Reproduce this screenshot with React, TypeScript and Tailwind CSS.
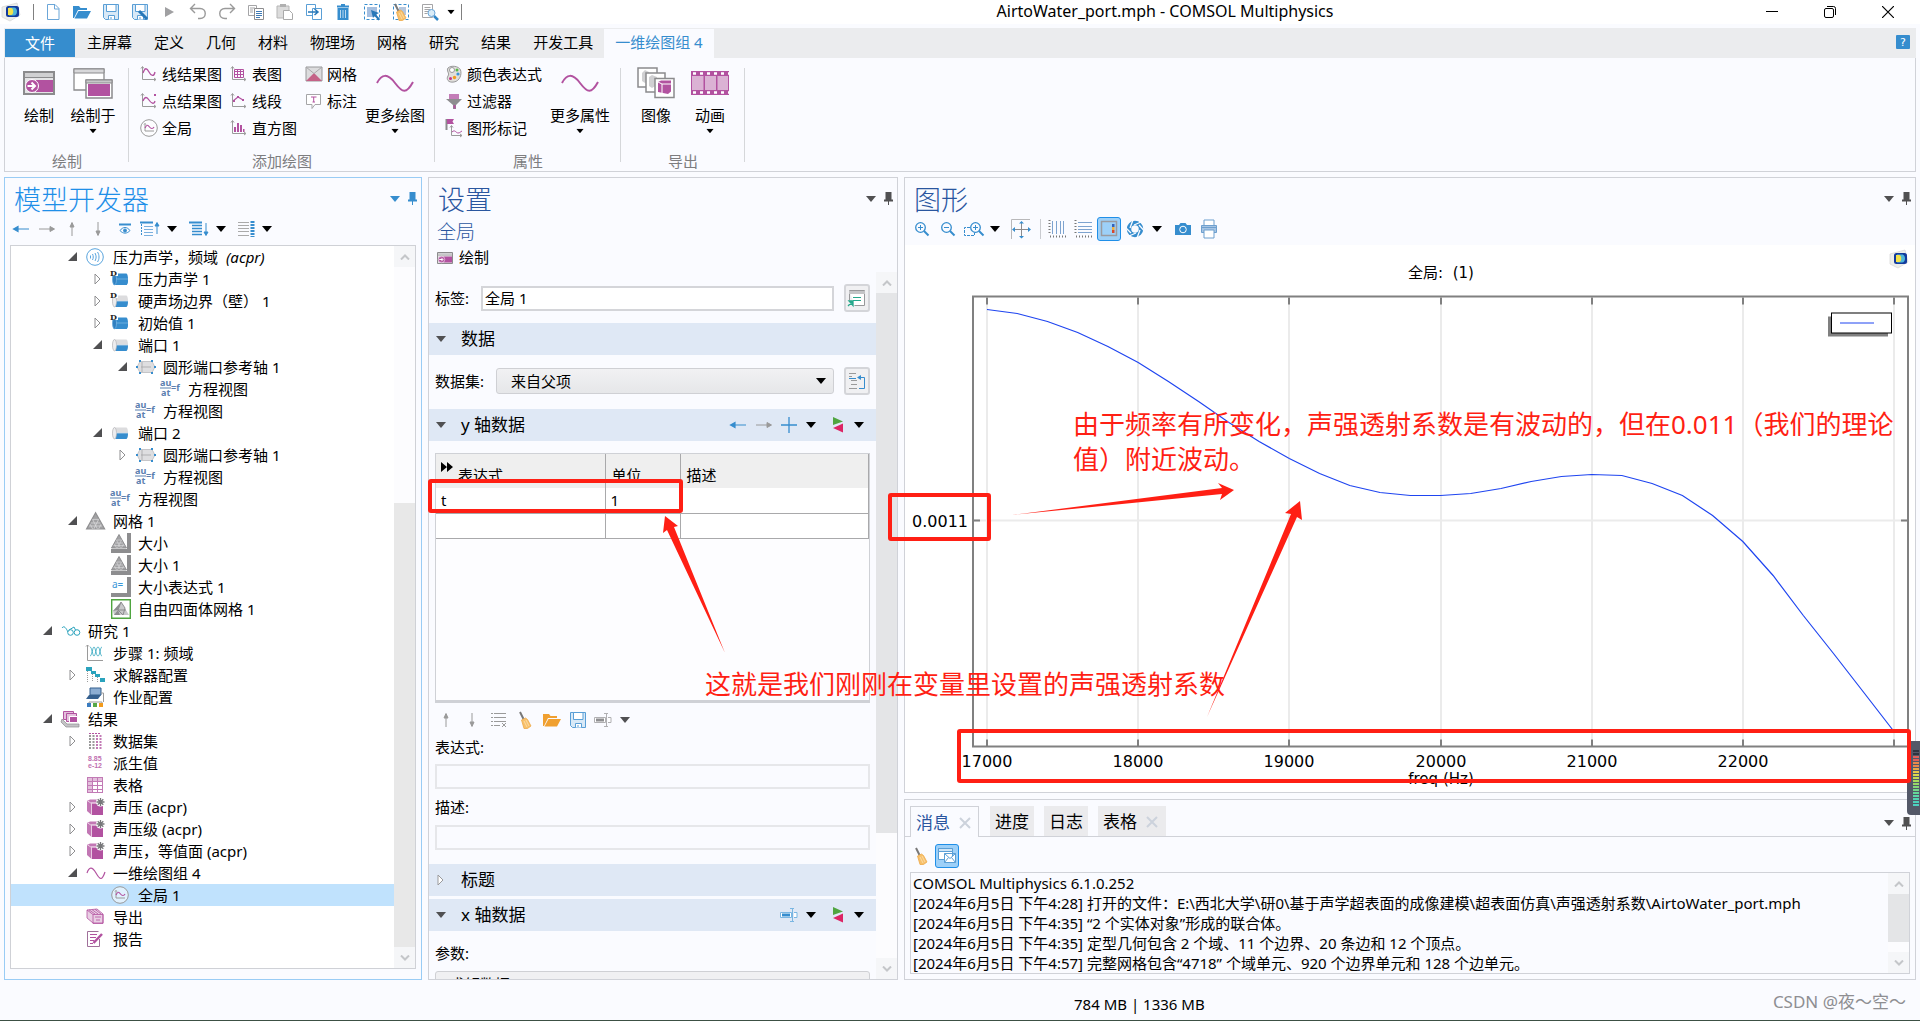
import React, { useState } from 'react';
import clsx from 'clsx';

const BLUE = '#368dce';
const GRAY = '#9a9a9a';
const DARK = '#505052';
const PURPLE = '#b252a0';
const TEAL = '#2ba3bd';

const UI_FONT = "font-['Noto_Sans','Noto_Sans_CJK_SC',sans-serif]";

/* ---------- icons ---------- */

interface IconDef {
    w: number;
    h: number;
    body: React.ReactNode;
}

const axes = <path d="M2.500 2v12.500h13M1 3.500l1.500-2 1.500 2M14 13l2 1.500-2 1.500" fill="none" stroke={GRAY} />;

const broomBody = (
    <g>
        <path d="M3 1l3.500 7" stroke="#777" strokeWidth="2" />
        <path d="M4.500 9l4-2 2 1.500 3.500 6.500-3.500 2.500H7z" fill="#f7c06a" stroke="#eda94a" strokeWidth=".8" />
        <path d="M7 10l3 6M9 9l3 6" stroke="#fbe0b0" strokeWidth=".8" />
    </g>
);

const floppy = (
    <g fill="none" stroke="#5a9fd6">
        <path d="M1.500 1.500h15v15h-13l-2-2z" fill="#d8e9f7" />
        <path d="M4.500 1.500h9.500v7H4.500z" fill="#fff" />
        <path d="M6.500 16.500v-4h6v4M9 16v-2" fill="#fff" />
    </g>
);

const cylinder = (dark: boolean) => (
    <g>
        <path d="M3 3.500h12.500c2 1 2 10.500 0 11.500H3c-2-1-2-10.500 0-11.500z" fill={dark ? BLUE : '#dcdcde'} />
        <path d="M4.500 9H17c0 3-.5 5-1.500 6H4.500z" fill={BLUE} />
        <ellipse cx="3.500" cy="9.200" rx="2" ry="5.700" fill={dark ? '#2f7fc0' : '#ededef'} stroke={dark ? '#7ab6e2' : '#b5b5b8'} strokeWidth=".7" />
        <path d="M5 9h12" stroke={dark ? '#7ab6e2' : '#c9dcec'} strokeWidth=".8" />
    </g>
);

const letterD = (
    <g>
        <path d="M-1-1h8v7h-8z" fill="#fff" />
        <text x="-1" y="6" fontSize="8" fontWeight="700" fontFamily="DejaVu Serif, serif" fill="#222">D</text>
    </g>
);

const meshTriangle = (
    <g fill="none">
        <path d="M8 1.500l7.500 13.500H.5z" fill="#a2a2a4" stroke="#8f8f91" />
        <path d="M5.500 7h5M4 10h8M2.500 12.500h11M5.500 7l4 8M3.500 11l2 4M10.500 7l-4 8M12.500 11l-2 4" stroke="#dcdcde" strokeWidth=".6" />
    </g>
);

const sizeFrame = <path d="M0 16h16V0h4v20H0z" fill="#8d8d8f" />;

const cubeStar = (
    <g>
        <path d="M1 3l3-1.500h9l-1 3H5v12L1 13z" fill="#c277b4" />
        <path d="M5.500 5.500H17V17H5.500z" fill={PURPLE} />
        <path d="M1 2.500l4.500 3V17" fill="none" stroke="#e8c9e2" />
        <circle cx="14.500" cy="4" r="4.500" fill="#fff" />
        <path d="M14.500 0v8M10.500 4h8M11.700 1.200l5.600 5.600M17.300 1.200l-5.600 5.600" stroke="#77777a" strokeWidth="1.300" />
    </g>
);

const sine = (w: number, h: number) => (
    <path
        d={`M1 ${h / 2}C${w * 0.15} 0 ${w * 0.3} -1 ${w / 2} ${h / 2}S${w * 0.8} ${h + 2} ${w - 1} ${h / 2 - 1}`}
        fill="none"
        stroke={PURPLE}
        strokeWidth={w > 24 ? 2 : 1.200}
    />
);

const windowPlot = (
    <g>
        <path d="M1 1h30v22H1z" fill="#e4e4e6" stroke="#8b8b8d" strokeWidth="2" />
        <path d="M2 2h28v4H2z" fill="#d0d0d2" />
        <path d="M2 6.500h28" stroke="#8b8b8d" />
        <path d="M13 9h17v12H13z" fill={PURPLE} />
        <circle cx="9" cy="15" r="6.500" fill={PURPLE} stroke="#fff" />
        <path d="M4.500 15h7M8.500 11.500l3.500 3.500-3.500 3.500" stroke="#fff" strokeWidth="2" fill="none" />
    </g>
);

const magnifier = (
    <g fill="none" stroke={BLUE}>
        <circle cx="5.500" cy="5.500" r="4.800" strokeWidth="1.300" />
        <path d="M9 9l4.500 4.500" strokeWidth="2" />
    </g>
);

const comsolMark = (
    <g>
        <path d="M1 5l15-4 3 12-10 6-8-4z" fill="#eceeea" stroke="#d8d8d8" strokeWidth=".8" />
        <rect x="5" y="4" width="13" height="11" rx="2.500" fill="#123a9c" />
        <path d="M8 5.500h5c4 0 4 8 0 8H8z" fill="#4fb6d8" />
        <path d="M7 6h3c3 0 3 7 0 7H7z" fill="#f3e24a" />
    </g>
);

const ICONS: Record<string, IconDef> = {
    comsol: { w: 20, h: 20, body: comsolMark },
    newFile: { w: 18, h: 18, body: <path d="M3.500 1.500h7.500l4 4v11h-11.500zM10.500 1.500v4.500h4.500" fill="#fff" stroke="#6ba6d8" /> },
    open: {
        w: 18, h: 18,
        body: <g fill={BLUE}><path d="M0 3h6l1.500 2H14v2H5l-4 8H0z" /><path d="M5.500 8H18l-4 7.500H1.500z" /></g>,
    },
    save: { w: 18, h: 18, body: floppy },
    saveAs: { w: 18, h: 18, body: <g>{floppy}<path d="M8 8l8 8" stroke="#2878b8" strokeWidth="3" /></g> },
    play: { w: 18, h: 18, body: <path d="M5 4l9 5-9 5z" fill="#a0a0a2" /> },
    undo: { w: 18, h: 18, body: <path d="M6 1L1.500 5.500 6 10M2 5.500h9c7 0 7 10 0 10H9" fill="none" stroke={GRAY} strokeWidth="1.400" /> },
    redo: { w: 18, h: 18, body: <path d="M12 1l4.500 4.500L12 10M16 5.500H7c-7 0-7 10 0 10h2" fill="none" stroke={GRAY} strokeWidth="1.400" /> },
    copy: {
        w: 18, h: 18,
        body: (
            <g fill="#fff">
                <path d="M1.500 2.500h8v10h-8z" stroke="#a5a5a7" />
                <path d="M3 5h5M3 7h3M3 9h3" stroke="#a5a5a7" />
                <path d="M7.500 5.500h9v11h-9z" stroke="#8d8d8f" />
                <path d="M9 8.500h6M9 10.500h6M9 12.500h6M9 14.500h4" stroke="#3f7ab5" />
            </g>
        ),
    },
    paste: {
        w: 18, h: 18,
        body: (
            <g>
                <path d="M1 3h12v12H1z" fill="#dcdcdc" stroke="#b5b5b5" />
                <path d="M4 1h6v3H4z" fill="#b0b0b0" />
                <path d="M7.500 7.500h6l3 3v6h-9z" fill="#fff" stroke="#a9a9a9" />
            </g>
        ),
    },
    duplicate: {
        w: 18, h: 18,
        body: (
            <g fill="#fff" stroke="#5a9fd6">
                <path d="M1.500 1.500h9v11h-9z" />
                <path d="M7.500 5.500h9v11h-9z" />
                <path d="M3 9h9M9.500 6l3.500 3-3.500 3" stroke="#2878b8" strokeWidth="1.500" fill="none" />
            </g>
        ),
    },
    trash: {
        w: 18, h: 18,
        body: (
            <g>
                <path d="M3.500 5h11v12h-11z" fill={BLUE} />
                <path d="M3 3.500h12M7 2h4" stroke={BLUE} strokeWidth="1.800" />
                <path d="M6.500 7v8M9 7v8M11.500 7v8" stroke="#bcd9ef" />
            </g>
        ),
    },
    select: {
        w: 18, h: 18,
        body: (
            <g>
                <path d="M1.500 1.500h15v15h-15z" fill="none" stroke={BLUE} strokeDasharray="3 2" />
                <path d="M4 4h10v10H4z" fill="#a5bfe0" />
                <path d="M8 7l8 3-3 1.500 4 4.500-1.500 1.500-4-4.500L10 15z" fill="#2878b8" />
            </g>
        ),
    },
    selectClear: {
        w: 18, h: 18,
        body: (
            <g>
                <path d="M1.500 1.500h15v15h-15z" fill="none" stroke={BLUE} strokeDasharray="3 2" />
                <path d="M7 4h7v8H7z" fill="#b4c6de" />
                {broomBody}
            </g>
        ),
    },
    docSearch: {
        w: 18, h: 18,
        body: (
            <g>
                <path d="M1.500 1.500h10v13h-10z" fill="#fff" stroke="#a5a5a7" />
                <path d="M3.500 4.500h6M3.500 6.500h6M3.500 8.500h4M3.500 10.500h3" stroke="#a5a5a7" />
                <circle cx="10.500" cy="10" r="3.500" fill="#d9ecf8" stroke="#6ba6d8" />
                <path d="M13 13l4 4" stroke="#2f86c8" strokeWidth="2.500" />
            </g>
        ),
    },
    plotWindow: { w: 32, h: 24, body: windowPlot },
    plotIn: {
        w: 40, h: 32,
        body: (
            <g stroke="#8b8b8d">
                <path d="M1 2h30v21H1z" fill="#fff" strokeWidth="1.300" />
                <path d="M1 2h30v4H1z" fill="#d8d8da" />
                <path d="M13 13h26v18H13z" fill="#fff" strokeWidth="1.500" />
                <path d="M13 13h26v3H13z" fill="#c8c8ca" />
                <path d="M15 17h22v12H15z" fill={PURPLE} stroke="none" />
            </g>
        ),
    },
    lineGraph: { w: 18, h: 18, body: <g>{axes}<path d="M3 8c2-6 4-5 6-1s5 5 6 0" fill="none" stroke={PURPLE} strokeWidth="1.300" /></g> },
    pointGraph: {
        w: 18, h: 18,
        body: <g>{axes}<path d="M3 9c2-5 4-4 6-1s5 5 6 1" fill="none" stroke={PURPLE} strokeWidth="1.300" /><path d="M14 2h2v2h-2z" fill={PURPLE} /></g>,
    },
    global: {
        w: 18, h: 18,
        body: (
            <g fill="none">
                <circle cx="9" cy="9" r="8.300" stroke={GRAY} fill="#fff" fillOpacity=".5" />
                <path d="M5 4.500V12h9M4 5.500l1-1 1 1" stroke={GRAY} />
                <path d="M5 9c2-4 3-3 4.500-1s3.500 2 4.500 0" stroke={PURPLE} strokeWidth="1.200" />
            </g>
        ),
    },
    tableGraph: { w: 18, h: 18, body: <g>{axes}<path d="M4.500 4.500h9v8h-9zM4.500 6.500h9M4.500 9.500h9M7.500 4v8M10.500 4v8" fill="none" stroke={PURPLE} /></g> },
    segments: { w: 18, h: 18, body: <g>{axes}<path d="M3 9l5-4 5 3" fill="none" stroke={PURPLE} strokeWidth="1.200" /><path d="M7 4h2v2H7zM12 7h2v2h-2zM3 8h2v2H3z" fill={PURPLE} /></g> },
    histogram: { w: 18, h: 18, body: <g>{axes}<path d="M4 8h2v5H4zM7 4h2v9H7zM10 6h2v7h-2zM13 10h1.500v3H13z" fill={PURPLE} /></g> },
    meshPlot: {
        w: 18, h: 18,
        body: <g><path d="M1 2h16v14H1z" fill="#dcdcde" stroke="#98989a" /><path d="M1 16L9 8l8 8z" fill="#c46287" /><path d="M1 2l8 6.500L17 2" fill="none" stroke="#a8a8aa" /></g>,
    },
    annotation: {
        w: 18, h: 18,
        body: <g><path d="M1.500 2.500h14v10H10l-3 4v-4H1.500z" fill="#fff" stroke="#a5a5a7" /><path d="M6 5h5.500M8.700 5v5M7.500 10H10" stroke={PURPLE} fill="none" /></g>,
    },
    sineLarge: { w: 38, h: 18, body: sine(38, 18) },
    sine: { w: 20, h: 12, body: sine(20, 12) },
    palette: {
        w: 18, h: 18,
        body: (
            <g>
                <path d="M3 3c3-3 11-2 12.500 2S15 16 9 17 1 14 3 11s-2-5 0-8z" fill="#e0dfdb" stroke="#99999b" />
                <circle cx="7" cy="5" r="2.500" fill="#fff" stroke="#99999b" />
                <circle cx="12" cy="5" r="1.500" fill="#57b947" />
                <circle cx="13" cy="9" r="1.600" fill="#3a96d8" />
                <circle cx="9.500" cy="12.500" r="1.700" fill="#f39b1d" />
                <circle cx="5.500" cy="13.500" r="1.500" fill="#c0388a" />
            </g>
        ),
    },
    filter: {
        w: 18, h: 18,
        body: <g><path d="M4 2h10v5H4z" fill="#c47db8" /><path d="M1 7h16l-6 6v4H8v-4z" fill="#8d8d8f" /><path d="M8.500 13h2v4l-2-1z" fill={PURPLE} /></g>,
    },
    marker: {
        w: 18, h: 18,
        body: (
            <g fill="none">
                <path d="M1.500 0v11" stroke="#8b8b8d" strokeWidth="2" />
                <path d="M2 0h7L7.500 2.500 9 5H2z" fill={PURPLE} />
                <path d="M6.500 7v9.500H17M5 8.500l1.500-2 1.500 2M15 15l2 1.500-2 1.500" stroke={GRAY} />
                <path d="M7 13c3-3 4 1 6 1s2-1 4-2" stroke={PURPLE} />
            </g>
        ),
    },
    image: {
        w: 38, h: 32,
        body: (
            <g fill="#fff" stroke="#8b8b8d" strokeWidth="1.500">
                <path d="M1 1h19v19H1z" />
                <path d="M5 6l3-3 4 2v9l-4 2-3-2z" fill="#d0d0d2" stroke="none" />
                <path d="M9 6h19v19H9z" />
                <path d="M12 10l3-2 5 2v8l-5 3-3-2z" fill="#d0d0d2" stroke="none" />
                <path d="M18 11.500h19v19H18z" />
                <path d="M21 15l3-1.500h10v11L31 27l-10-2z" fill={PURPLE} stroke="none" />
                <path d="M21 15l4 2v9M25 17h9" stroke="#fff" fill="none" strokeWidth="1" />
            </g>
        ),
    },
    film: {
        w: 38, h: 24,
        body: (
            <g>
                <path d="M0 0h38v24H0z" fill={PURPLE} />
                <path d="M1 5h11.500v14H1zM14 5h11v14H14zM26.500 5H37v14H26.500z" fill="#dbb2d4" />
                <path d="M2 2.500h36M2 21.500h36" stroke="#fff" strokeWidth="2.500" strokeDasharray="3 4" />
            </g>
        ),
    },
    help: {
        w: 14, h: 14,
        body: <g><rect width="14" height="14" rx="1" fill={BLUE} /><text x="4" y="11" fontSize="11" fontFamily="DejaVu Sans, sans-serif" fill="#fff">?</text></g>,
    },
    left: { w: 18, h: 14, body: <path d="M1 7h16M1.500 7L6 4.500v5z" fill={BLUE} stroke={BLUE} strokeWidth="1.200" /> },
    right: { w: 18, h: 14, body: <path d="M1 7h15M16.500 7L12 4.500v5z" fill={GRAY} stroke={GRAY} /> },
    up: { w: 12, h: 16, body: <path d="M6 2v13M6 1.500L4 6h4z" fill={GRAY} stroke={GRAY} /> },
    down: { w: 12, h: 16, body: <path d="M6 1v13M6 14.500L4 10h4z" fill={GRAY} stroke={GRAY} /> },
    plus: { w: 18, h: 18, body: <path d="M9 1v16M1 9h16" stroke={BLUE} strokeWidth="1.300" /> },
    show: {
        w: 14, h: 12,
        body: <g fill="none" stroke={BLUE}><path d="M1 1.500h12" strokeWidth="2" /><path d="M2 7.500c3-4 7-4 10 0-3 3.500-7 3.500-10 0z" /><circle cx="7" cy="7.500" r="1.500" fill={BLUE} /></g>,
    },
    collapse: {
        w: 20, h: 16,
        body: (
            <g fill="none" stroke={BLUE}>
                <path d="M0 1.500h13" strokeWidth="2" />
                <path d="M1.500 3v12" strokeDasharray="2 1" />
                <path d="M4 5.500h9M4 8.500h9M4 11.500h9M4 14.500h9" stroke="#7ab0de" />
                <path d="M17 2v11M17 1.500L15 5h4z" fill={BLUE} />
            </g>
        ),
    },
    expand: {
        w: 20, h: 16,
        body: (
            <g fill="none" stroke={BLUE}>
                <path d="M0 1.500h13" strokeWidth="2" />
                <path d="M3 4.500h10M3 7.500h10M3 10.500h10M3 13.500h10" strokeWidth="1.500" />
                <path d="M17 2v11M17 14.500L15 11h4z" fill={BLUE} />
            </g>
        ),
    },
    columns: {
        w: 18, h: 16,
        body: <g fill="none"><path d="M0 1.500h11M0 4.500h11M0 7.500h11M0 10.500h11M0 14.500h11" stroke="#aaa" /><path d="M14.500 0v16" stroke={BLUE} strokeWidth="4" strokeDasharray="2 1" /></g>,
    },
    pin: { w: 9, h: 13, body: <path d="M1.500 0h6v7.500H9v2H5V13H4V9.500H0v-2h1.500z" fill="currentColor" /> },
    acoustics: {
        w: 18, h: 18,
        body: (
            <g fill="none" stroke="#5aa5de">
                <circle cx="9" cy="9" r="8.300" />
                <path d="M4.500 7.500v3M6.500 6c1 2 1 4 0 6M9 5c1.500 3 1.500 5 0 8M11.500 4c2 3 2 7 0 10" />
            </g>
        ),
    },
    domain: { w: 18, h: 18, body: <g>{cylinder(true)}{letterD}</g> },
    boundary: { w: 18, h: 18, body: <g>{cylinder(false)}{letterD}</g> },
    port: { w: 18, h: 18, body: cylinder(false) },
    portAxis: {
        w: 20, h: 18,
        body: (
            <g>
                <path d="M4 3.500h12l3 5.500-3 5.500H4L1 9z" fill="#dedee0" stroke="#c5c5c8" />
                <path d="M5 9h10M6 4v10" stroke="#a5a5a7" strokeWidth=".8" />
                <path d="M3 2h2v2H3zM15 2h2v2h-2zM3 14h2v2H3zM15 14h2v2h-2zM0 8h2v2H0zM18 8h2v2h-2z" fill={BLUE} />
            </g>
        ),
    },
    equation: {
        w: 21, h: 18,
        body: (
            <g fontSize="9" fontWeight="700" fontFamily="Noto Sans, sans-serif" fill="#5b80b0">
                <text x="-1" y="6">au</text>
                <text x="0" y="16">at</text>
                <path d="M-1 8h11" stroke="#5b80b0" />
                <text x="10" y="11">=f</text>
            </g>
        ),
    },
    mesh: { w: 20, h: 18, body: <g transform="translate(0 -1) scale(1.200)">{meshTriangle}</g> },
    meshSize: { w: 20, h: 20, body: <g>{sizeFrame}<path d="M0 0h16v16H0z" fill="#fff" />{meshTriangle}</g> },
    sizeExpr: {
        w: 20, h: 20,
        body: <g>{sizeFrame}<path d="M0 0h16v16H0z" fill="#fff" /><text x="1" y="11" fontSize="10" fontFamily="Noto Sans, sans-serif" fill="#3a96d8">a=</text></g>,
    },
    tetra: {
        w: 20, h: 20,
        body: (
            <g>
                <path d="M.7.700h18.600v18.600H.7z" fill="#fff" stroke="#4fa53f" strokeWidth="1.400" />
                <path d="M10 3L2 12l1 4h15z" fill="#c8c8ca" />
                <path d="M10 3L2 12l5-1zM7 11l-4 5h6z" fill="#8d8d8f" />
                <path d="M10 3l-3 8 5 5 2-7zM7 11h8" fill="none" stroke="#8d8d8f" />
            </g>
        ),
    },
    study: {
        w: 20, h: 12,
        body: <g fill="none" stroke={TEAL}><path d="M1 3c2-3 4 0 6 4" /><circle cx="9.500" cy="7.500" r="2.800" /><circle cx="16" cy="7.500" r="2.800" /><path d="M8 5l5-3 1.500 3" /></g>,
    },
    freqStep: {
        w: 18, h: 18,
        body: <g fill="none"><path d="M1.500 1v15.500H17M0 2.500L1.500 1 3 2.500" stroke={GRAY} /><path d="M4 3c2 0 2.500 9 4 9s2-9 4-9 2 9 4 9M4 12c2 0 2.500-9 4-9s2 9 4 9 2-9 4-9" stroke={TEAL} strokeWidth=".8" /></g>,
    },
    solver: {
        w: 19, h: 18,
        body: <g><path d="M1.500 5v11M6.500 8v8M11.500 11v5" stroke={GRAY} strokeDasharray="1 1" /><path d="M0 1h6v4H0zM5 5h5v3H5zM9 8h5v3H9zM14 12h5v4h-5z" fill={TEAL} /></g>,
    },
    job: {
        w: 19, h: 20,
        body: (
            <g>
                <path d="M4 1h11v7H4z" fill="#8cadd2" stroke="#35608f" />
                <path d="M3 8h12l-3 4H0z" fill="#35608f" />
                <path d="M3 17v-2h13v2M15 6h2.500v9" fill="none" stroke={GRAY} />
                <path d="M1 16h4v4H1z" fill="#3a7cc0" /><path d="M7 16h4v4H7z" fill="#57a847" /><path d="M13 16h4v4h-4z" fill="#f39b1d" />
            </g>
        ),
    },
    results: {
        w: 19, h: 18,
        body: (
            <g fill="#fff">
                <path d="M2.500 1.500h10v8h-10z" fill="#e3bfdc" stroke={PURPLE} />
                <path d="M5.500 3.500h10v8h-10z" fill="#e3bfdc" stroke={PURPLE} />
                <path d="M8.500 6.500h8v6h-8z" fill={PURPLE} stroke="#fff" />
                <path d="M1 9l5 5h12v3H5L0 12z" fill="#c4c4c6" stroke="#8d8d8f" strokeWidth=".7" />
            </g>
        ),
    },
    dataset: {
        w: 18, h: 18,
        body: <g fill="none"><path d="M3 1.500h12" stroke={PURPLE} strokeDasharray="2 1" /><path d="M4 3v14M7.500 3v14" stroke={GRAY} strokeWidth="2" strokeDasharray="2 1" /><path d="M11 3v14M14.500 3v14" stroke="#c27ab5" strokeWidth="2" strokeDasharray="2 1" /></g>,
    },
    derived: {
        w: 18, h: 18,
        body: <g fontSize="7" fontWeight="700" fontFamily="Liberation Sans, sans-serif" fill="#bf6fb1"><text x="2" y="7">8.85</text><text x="2" y="14">e-12</text></g>,
    },
    table: {
        w: 18, h: 18,
        body: <g><path d="M1 1h16v4H1zM1 1h5v16H1z" fill="#e3bfdc" /><path d="M1 1.500h16M1 5.500h16M1 9.500h16M1 13.500h16M1 16.500h16M1.500 1v16M6.500 1v16M11.500 1v16M16.500 1v16" stroke="#c27ab5" /></g>,
    },
    plot3d: { w: 19, h: 18, body: cubeStar },
    exportNode: {
        w: 18, h: 18,
        body: (
            <g fill="#e9cfe4" stroke={PURPLE} strokeWidth=".8">
                <path d="M1 2l10-1 6 5v9H7L1 10z" />
                <path d="M7 6.500h10v9H7zM1 2l6 4.500M3 1.800L9 6M6 1.600L12 6M9 1.300L15 6M9 9h6M10 12h4" fill="none" />
            </g>
        ),
    },
    report: {
        w: 18, h: 18,
        body: (
            <g fill="none" stroke={PURPLE}>
                <path d="M13.500 9v7.500h-12V1.500h11" stroke="#a0709a" />
                <path d="M4 4.500h7M4 7.500h6M4 10.500h4M4 13.500h3" />
                <path d="M7.500 13l8.500-9" strokeWidth="2.500" />
            </g>
        ),
    },
    labelBtn: {
        w: 18, h: 18,
        body: (
            <g fill="none">
                <path d="M1.500 1.500h15v15h-10M1.500 1.500v10" stroke="#98989a" fill="#fff" />
                <path d="M1 2h16v3H1z" fill="#c4c4c6" />
                <path d="M5 8.500h8M5 11.500h8" stroke="#27a88c" />
                <path d="M0 17l4-4M5 12v4.500L1 12z" stroke="#27a88c" strokeWidth="1.300" fill="#27a88c" />
            </g>
        ),
    },
    gotoBtn: {
        w: 18, h: 18,
        body: (
            <g fill="none">
                <path d="M1 1.500h7M1 4.500h3M3 8.500h6M3 12.500h6M1 16.500h8" stroke={GRAY} />
                <path d="M1 6.500h7M12 5.500h4.500v11H11" stroke={BLUE} />
                <path d="M13 3v5l-4-2.500z" fill={BLUE} />
            </g>
        ),
    },
    addRemove: { w: 12, h: 16, body: <g><path d="M1 0l10 4.500L1 8z" fill="#4fa53f" /><path d="M11 6.500v9L1 11z" fill="#dc2464" /></g> },
    listDel: {
        w: 16, h: 16,
        body: <g fill="none" stroke={GRAY}><path d="M0 1.500h16M0 5.500h16M0 9.500h16M0 13.500h9" strokeDasharray="2 1 12" /><path d="M11 11l4 4M15 11l-4 4" /></g>,
    },
    broom: { w: 16, h: 18, body: broomBody },
    openOrange: { w: 18, h: 16, body: <g fill="#f0a030"><path d="M0 2h6l1.500 2H14v2H5l-4 8H0z" /><path d="M5.500 7H18l-4 7.500H1.500z" /></g> },
    renameGray: {
        w: 18, h: 14,
        body: <g fill="none" stroke="#b0b0b2"><path d="M.5 4.500h11v5H.5zM14 4.500h3v5h-3" fill="#fff" /><path d="M2 7h8" stroke="#8f8f91" strokeWidth="3" /><path d="M10 .5h4M10 13.500h4M12.500 1v12" /></g>,
    },
    renameBlue: {
        w: 18, h: 14,
        body: <g fill="none" stroke="#7ab6e2"><path d="M.5 4.500h11v5H.5zM14 4.500h3v5h-3" fill="#fff" /><path d="M2 7h8" stroke={BLUE} strokeWidth="3" /><path d="M10 .5h4M10 13.500h4M12.500 1v12" /></g>,
    },
    zoomIn: { w: 14, h: 14, body: <g>{magnifier}<path d="M3 5.500h5M5.500 3v5" stroke={BLUE} /></g> },
    zoomOut: { w: 14, h: 14, body: <g>{magnifier}<path d="M3 5.500h5" stroke={BLUE} /></g> },
    zoomBox: {
        w: 20, h: 14,
        body: <g><path d="M6 5.500H.5v8h10v-3" fill="none" stroke={BLUE} strokeDasharray="3 1" /><g transform="translate(6 0)">{magnifier}<path d="M3 5.500h5M5.500 3v5" stroke={BLUE} /></g></g>,
    },
    extents: {
        w: 20, h: 20,
        body: (
            <g fill="none">
                <path d="M.5 20V.5H19" stroke="#b8b8ba" />
                <path d="M3 10.500h15M10.500 3v15" stroke="#8b8b8d" />
                <path d="M4 8v5L1 10.500zM17 8v5l3-2.500zM8 4.500h5L10.500 2zM8 17h5l-2.500 2.500z" fill={BLUE} />
            </g>
        ),
    },
    gridX: {
        w: 18, h: 18,
        body: <g fill="none"><path d="M4.500 1v13M8.500 1v13M12.500 1v13M15.500 1v13" stroke="#7da3cf" /><path d="M1.500 0v15" stroke="#777" strokeDasharray="1 2" strokeWidth="2" /><path d="M2 16.500h16" stroke="#777" strokeDasharray="1 2" strokeWidth="2" /></g>,
    },
    gridY: {
        w: 18, h: 18,
        body: <g fill="none"><path d="M4 2.500h14M4 6.500h14M4 9.500h14M4 12.500h14" stroke="#7da3cf" /><path d="M1.500 0v15" stroke="#777" strokeDasharray="1 2" strokeWidth="2" /><path d="M2 16.500h16" stroke="#777" strokeDasharray="1 2" strokeWidth="2" /></g>,
    },
    legend: {
        w: 18, h: 18,
        body: (
            <g>
                <path d="M1.500 1.500h15v14h-15z" fill="none" stroke="#9a9aa0" strokeWidth="1.500" />
                <path d="M12 4h2.500v3H12z" fill="#3462b8" /><path d="M12 7h2.500v3H12z" fill="#f0b040" /><path d="M12 10h2.500v3H12z" fill="#d8482c" />
            </g>
        ),
    },
    aperture: {
        w: 18, h: 18,
        body: <g fill="none"><circle cx="9" cy="9" r="6" stroke={BLUE} strokeWidth="4.500" /><path d="M7 0L4 8M15 2l-7 3M17.500 10L13 5M11 18l3-8M3 16l7-3M0 8l5 5" stroke="#fafbff" strokeWidth="1.300" /></g>,
    },
    camera: {
        w: 18, h: 14,
        body: <g><path d="M1 3h4l1.500-2h5L13 3h4v10H1z" fill={BLUE} /><circle cx="9" cy="7.500" r="3.300" fill="none" stroke="#fff" /></g>,
    },
    printer: {
        w: 18, h: 20,
        body: (
            <g stroke="#6d9fce">
                <path d="M4 1h10v6H4z" fill="#fff" />
                <path d="M1.500 6.500h15v7h-15z" fill="#a5c4e4" />
                <path d="M1.500 8.500h15" />
                <path d="M4 11h10v8H4z" fill="#fff" />
            </g>
        ),
    },
    mailWindow: {
        w: 18, h: 16,
        body: (
            <g fill="#fff" stroke="#5a9fd6">
                <path d="M.5.500h14v11H.5z" />
                <path d="M.5.500h14v3H.5z" fill="#cfe5f7" />
                <path d="M6.500 5.500h11v9h-11zM6.500 5.500l5.500 5 5.500-5M6.500 14.500l4-5M17.500 14.500l-4-5" />
            </g>
        ),
    },
};

function Icon({ name }: { name: string }) {
    const { w, h, body } = ICONS[name];
    return (
        <svg className="shrink-0 overflow-visible" width={w} height={h} viewBox={`0 0 ${w} ${h}`} aria-hidden="true">
            {body}
        </svg>
    );
}

function Caret({ className = 'text-black' }: { className?: string }) {
    return (
        <svg className={clsx('shrink-0', className)} width="10" height="6" viewBox="0 0 10 6" aria-hidden="true">
            <path d="M0 0h10L5 6z" fill="currentColor" />
        </svg>
    );
}

function Chevron({ up = false }: { up?: boolean }) {
    return (
        <span className="flex h-[21px] shrink-0 items-center justify-center bg-[#f5f6f8]">
            <svg width="10" height="6" viewBox="0 0 10 6" aria-hidden="true">
                <path d={up ? 'M1 5.500l4-4 4 4' : 'M1 .500l4 4 4-4'} fill="none" stroke="#c4c6c9" strokeWidth="2" />
            </svg>
        </span>
    );
}

function IconButton({ name, label, className = '' }: { name: string; label: string; className?: string }) {
    return (
        <button type="button" aria-label={label} className={clsx('flex items-center justify-center', className)}>
            <Icon name={name} />
        </button>
    );
}

/* ---------- title bar and ribbon ---------- */

const QUICK_ACTIONS: [string, string][] = [
    ['newFile', '新建'], ['open', '打开'], ['save', '保存'], ['saveAs', '另存为'], ['play', '运行'],
    ['undo', '撤消'], ['redo', '重做'], ['copy', '复制'], ['paste', '粘贴'], ['duplicate', '创建副本'],
    ['trash', '删除'], ['select', '选择'], ['selectClear', '清除选择'], ['docSearch', '查找'],
];

function TitleBar() {
    return (
        <header className="flex h-6 shrink-0 items-center bg-white pl-px">
            <Icon name="comsol" />
            <span className="ml-3 h-4 w-px bg-[#808080]" />
            <div className="ml-[10px] flex items-center gap-[11px]">
                {QUICK_ACTIONS.map(([name, label]) => (
                    <IconButton key={name} name={name} label={label} />
                ))}
            </div>
            <button type="button" aria-label="自定义" className="ml-[7px] scale-75">
                <Caret />
            </button>
            <span className="ml-[5px] h-4 w-px bg-[#808080]" />
            <h1 className="flex-1 pb-[2px] pl-[126px] text-center text-base leading-5">AirtoWater_port.mph - COMSOL Multiphysics</h1>
            <div className="flex w-[178px] items-center justify-end gap-[46px] pb-px pr-[26px]">
                <button type="button" aria-label="最小化">
                    <svg width="12" height="12" viewBox="0 0 12 12"><path d="M0 5.500h12" stroke="#000" /></svg>
                </button>
                <button type="button" aria-label="还原">
                    <svg width="12" height="12" viewBox="0 0 12 12" fill="none" stroke="#000">
                        <rect x=".5" y="2.500" width="9" height="9" rx="1.500" />
                        <path d="M3 .5h6.500a2 2 0 0 1 2 2V9" />
                    </svg>
                </button>
                <button type="button" aria-label="关闭">
                    <svg width="12" height="12" viewBox="0 0 12 12"><path d="M0 0l12 12M12 0L0 12" stroke="#000" strokeWidth="1.200" /></svg>
                </button>
            </div>
        </header>
    );
}

const MENU_TABS = ['主屏幕', '定义', '几何', '材料', '物理场', '网格', '研究', '结果', '开发工具'];

function MenuTabs() {
    return (
        <nav className="mx-1 mt-1 flex h-[30px] shrink-0 items-stretch bg-[#ebecee] text-[15px] leading-5">
            <button type="button" className="mx-px mb-px mt-px w-[70px] bg-[#368dce] text-white">文件</button>
            {MENU_TABS.map(tab => (
                <button key={tab} type="button" className="px-[11px] pb-[2px]">{tab}</button>
            ))}
            <button type="button" className="mt-px bg-[#fafbff] px-[11px] pb-[3px] text-[#368dce]">一维绘图组 4</button>
            <IconButton name="help" label="帮助" className="ml-auto mr-[6px] pb-[2px]" />
        </nav>
    );
}

function BigButton({ icon, label, menu = false, className = '' }: { icon: string; label: string; menu?: boolean; className?: string }) {
    return (
        <button type="button" className={clsx('flex flex-col items-center', className)}>
            <span className="flex h-9 items-center"><Icon name={icon} /></span>
            <span className="mt-1 leading-5">{label}</span>
            {menu && <span className="mt-[3px] scale-75"><Caret /></span>}
        </button>
    );
}

function SmallButtons({ items }: { items: [string, string][] }) {
    return (
        <div className="flex flex-col">
            {items.map(([icon, label]) => (
                <button key={label} type="button" className="flex h-[27px] items-center gap-1 leading-5">
                    <Icon name={icon} />
                    {label}
                </button>
            ))}
        </div>
    );
}

function RibbonGroup({ title, className, children }: { title: string; className?: string; children: React.ReactNode }) {
    return (
        <section className="relative flex flex-col justify-between pt-[2px] after:absolute after:bottom-[9px] after:right-0 after:top-[10px] after:w-px after:bg-[#d5d7da]">
            <div className={clsx('flex items-start', className)}>{children}</div>
            <h2 className="text-center leading-5 text-[#7d7d7f]">{title}</h2>
        </section>
    );
}

function Ribbon() {
    return (
        <div className="mx-1 flex h-[114px] shrink-0 border border-t-0 border-[#d0d2d8] text-[15px]">
            <RibbonGroup title="绘制" className="gap-2 pl-3 pr-3 pt-[5px]">
                <BigButton icon="plotWindow" label="绘制" className="w-11" />
                <BigButton icon="plotIn" label="绘制于" menu className="w-12" />
            </RibbonGroup>
            <RibbonGroup title="添加绘图" className="gap-2 pl-[11px] pr-[10px]">
                <SmallButtons items={[['lineGraph', '线结果图'], ['pointGraph', '点结果图'], ['global', '全局']]} />
                <SmallButtons items={[['tableGraph', '表图'], ['segments', '线段'], ['histogram', '直方图']]} />
                <SmallButtons items={[['meshPlot', '网格'], ['annotation', '标注']]} />
                <BigButton icon="sineLarge" label="更多绘图" menu className="pt-[5px]" />
            </RibbonGroup>
            <RibbonGroup title="属性" className="gap-2 pl-[10px] pr-[11px]">
                <SmallButtons items={[['palette', '颜色表达式'], ['filter', '过滤器'], ['marker', '图形标记']]} />
                <BigButton icon="sineLarge" label="更多属性" menu className="pt-[5px]" />
            </RibbonGroup>
            <RibbonGroup title="导出" className="gap-4 px-4 pt-[5px]">
                <BigButton icon="image" label="图像" />
                <BigButton icon="film" label="动画" menu />
            </RibbonGroup>
        </div>
    );
}

/* ---------- model builder ---------- */

interface TreeNode {
    level: number;
    icon: string;
    text: string;
    state?: 'open' | 'closed';
    tag?: string;
}

const TREE: TreeNode[] = [
    { level: 1, icon: 'acoustics', text: '压力声学，频域', tag: '(acpr)', state: 'open' },
    { level: 2, icon: 'domain', text: '压力声学 1', state: 'closed' },
    { level: 2, icon: 'boundary', text: '硬声场边界（壁） 1', state: 'closed' },
    { level: 2, icon: 'domain', text: '初始值 1', state: 'closed' },
    { level: 2, icon: 'port', text: '端口 1', state: 'open' },
    { level: 3, icon: 'portAxis', text: '圆形端口参考轴 1', state: 'open' },
    { level: 4, icon: 'equation', text: '方程视图' },
    { level: 3, icon: 'equation', text: '方程视图' },
    { level: 2, icon: 'port', text: '端口 2', state: 'open' },
    { level: 3, icon: 'portAxis', text: '圆形端口参考轴 1', state: 'closed' },
    { level: 3, icon: 'equation', text: '方程视图' },
    { level: 2, icon: 'equation', text: '方程视图' },
    { level: 1, icon: 'mesh', text: '网格 1', state: 'open' },
    { level: 2, icon: 'meshSize', text: '大小' },
    { level: 2, icon: 'meshSize', text: '大小 1' },
    { level: 2, icon: 'sizeExpr', text: '大小表达式 1' },
    { level: 2, icon: 'tetra', text: '自由四面体网格 1' },
    { level: 0, icon: 'study', text: '研究 1', state: 'open' },
    { level: 1, icon: 'freqStep', text: '步骤 1: 频域' },
    { level: 1, icon: 'solver', text: '求解器配置', state: 'closed' },
    { level: 1, icon: 'job', text: '作业配置' },
    { level: 0, icon: 'results', text: '结果', state: 'open' },
    { level: 1, icon: 'dataset', text: '数据集', state: 'closed' },
    { level: 1, icon: 'derived', text: '派生值' },
    { level: 1, icon: 'table', text: '表格' },
    { level: 1, icon: 'plot3d', text: '声压 (acpr)', state: 'closed' },
    { level: 1, icon: 'plot3d', text: '声压级 (acpr)', state: 'closed' },
    { level: 1, icon: 'plot3d', text: '声压，等值面 (acpr)', state: 'closed' },
    { level: 1, icon: 'sine', text: '一维绘图组 4', state: 'open' },
    { level: 2, icon: 'global', text: '全局 1' },
    { level: 1, icon: 'exportNode', text: '导出' },
    { level: 1, icon: 'report', text: '报告' },
];

function PanelControls({ className = 'text-[#505052]' }: { className?: string }) {
    return (
        <div className={clsx('flex items-center gap-2', className)}>
            <button type="button" aria-label="面板菜单"><Caret className="text-current" /></button>
            <button type="button" aria-label="固定面板"><Icon name="pin" /></button>
        </div>
    );
}

function PanelHeading({ title, active = false }: { title: string; active?: boolean }) {
    return (
        <div className="flex shrink-0 items-start justify-between pl-[9px] pr-1 pt-1">
            <h2 className={clsx('text-[27px] font-light leading-9', active ? 'text-[#1f8fe8]' : 'text-[#2a569f]')}>{title}</h2>
            <div className="pt-[10px]">
                <PanelControls className={active ? 'text-[#368dce]' : 'text-[#505052]'} />
            </div>
        </div>
    );
}

function Twisty({ state }: { state?: 'open' | 'closed' }) {
    if (!state) return <span className="w-6" />;
    return (
        <button type="button" aria-label={state === 'open' ? '折叠' : '展开'} className="flex w-6 items-center pl-[6px]">
            <svg width="9" height="12" viewBox="0 0 9 12">
                {state === 'open'
                    ? <path d="M9 1v9H0z" fill={DARK} />
                    : <path d="M2 1l5 5-5 5z" fill="#fff" stroke="#8f8f91" />}
            </svg>
        </button>
    );
}

function ModelBuilder() {
    const [selected, setSelected] = useState(29);
    return (
        <section className="flex w-[418px] shrink-0 flex-col border border-[#99ccf5]">
            <PanelHeading title="模型开发器" active />
            <div className="flex h-[27px] shrink-0 items-center pb-[6px] pl-[7px]">
                <IconButton name="left" label="后退" />
                <IconButton name="right" label="前进" className="ml-2" />
                <IconButton name="up" label="上移" className="ml-[10px]" />
                <IconButton name="down" label="下移" className="ml-[14px]" />
                <IconButton name="show" label="显示" className="ml-[14px]" />
                <IconButton name="collapse" label="折叠" className="ml-2" />
                <button type="button" aria-label="折叠选项" className="ml-[7px]"><Caret /></button>
                <IconButton name="expand" label="展开" className="ml-3" />
                <button type="button" aria-label="展开选项" className="ml-[7px]"><Caret /></button>
                <IconButton name="columns" label="列" className="ml-3" />
                <button type="button" aria-label="列选项" className="ml-[6px]"><Caret /></button>
            </div>
            <div className="mx-[5px] mb-[10px] flex min-h-0 flex-1 border border-[#cfd1d6] bg-white">
                <ul role="tree" className="min-w-0 flex-1 overflow-hidden text-[15px]">
                    {TREE.map((node, i) => (
                        <li
                            key={i}
                            role="treeitem"
                            aria-selected={i === selected}
                            onClick={() => setSelected(i)}
                            className={clsx('flex h-[22px] items-center whitespace-nowrap leading-[22px]', i === selected && 'bg-[#c0e2fd]')}
                            style={{ paddingLeft: 26 + node.level * 25 }}
                        >
                            <Twisty state={node.state} />
                            <span className="flex w-[27px] items-center"><Icon name={node.icon} /></span>
                            <span>{node.text}</span>
                            {node.tag && <em className="ml-2">{node.tag}</em>}
                        </li>
                    ))}
                </ul>
                <div className="flex w-[21px] flex-col bg-[#fcfcfe]">
                    <Chevron up />
                    <span className="flex-[236]" />
                    <span className="flex-[444] bg-[#e8e8e8]" />
                    <Chevron />
                </div>
            </div>
        </section>
    );
}

/* ---------- settings ---------- */

function SectionBar({ title, open = true, children }: { title: string; open?: boolean; children?: React.ReactNode }) {
    return (
        <div className="flex h-8 items-center bg-[#dfe8f5] pl-[7px] pr-3">
            <button type="button" className="flex items-center">
                <span className="flex w-[25px] items-center">
                    {open ? <Caret className="text-[#505052]" /> : (
                        <svg width="9" height="12" viewBox="0 0 9 12"><path d="M2 1l5 5-5 5z" fill="#fff" stroke="#9a9a9c" /></svg>
                    )}
                </span>
                <span className="pb-px text-[17px] leading-6">{title}</span>
            </button>
            <div className="ml-auto flex items-center">{children}</div>
        </div>
    );
}

function SquareButton({ name, label }: { name: string; label: string }) {
    return (
        <IconButton name={name} label={label} className="ml-[10px] h-7 w-[26px] shrink-0 rounded-[3px] border-2 border-[#d4d5d9] bg-[#f0f0f2]" />
    );
}

const inputClass = 'h-[25px] min-w-0 border-2 px-1 pb-px text-[15px] leading-5 outline-none';

function Settings() {
    const [label, setLabel] = useState('全局 1');
    return (
        <section className="flex w-[470px] shrink-0 flex-col border border-[#d0d2d8]">
            <PanelHeading title="设置" />
            <p className="pl-2 text-[19px] font-light leading-7 text-[#2a569f]">全局</p>
            <button type="button" className="ml-2 flex h-[23px] w-fit items-center gap-[6px] text-[15px]">
                <svg width="16" height="12" viewBox="0 0 32 24" aria-hidden="true">{windowPlot}</svg>
                绘制
            </button>
            <div className="mt-[3px] flex min-h-0 flex-1">
                <div className="min-w-0 flex-1 overflow-hidden text-[15px] leading-5">
                    <div className="flex items-center px-[6px] pb-[11px] pt-3">
                        <label htmlFor="node-label" className="w-[46px]">标签:</label>
                        <input id="node-label" value={label} onChange={e => setLabel(e.target.value)} className={clsx(inputClass, 'flex-1 border-[#d4d5d9] bg-white px-[2px]')} />
                        <SquareButton name="labelBtn" label="转到标签" />
                    </div>
                    <SectionBar title="数据" />
                    <div className="flex items-center px-[6px] pb-[14px] pt-3">
                        <label htmlFor="dataset" className="w-[61px]">数据集:</label>
                        <div className="relative flex-1">
                            <select id="dataset" className="h-[26px] w-full appearance-none rounded-[3px] border border-[#cfd0d4] bg-linear-to-b from-[#f1f1f3] to-[#e6e7e9] px-[14px] leading-5">
                                <option>来自父项</option>
                            </select>
                            <span className="pointer-events-none absolute right-2 top-[10px]"><Caret /></span>
                        </div>
                        <SquareButton name="gotoBtn" label="转到源" />
                    </div>
                    <SectionBar title="y 轴数据">
                        <IconButton name="left" label="上一个" />
                        <IconButton name="right" label="下一个" className="ml-2" />
                        <IconButton name="plus" label="添加" className="ml-[7px]" />
                        <button type="button" aria-label="添加选项" className="ml-2"><Caret /></button>
                        <IconButton name="addRemove" label="替换表达式" className="ml-4" />
                        <button type="button" aria-label="替换选项" className="ml-[10px]"><Caret /></button>
                    </SectionBar>
                    <div className="mx-[6px] mt-3 h-[250px] border border-b-[3px] border-[#cfd1d6] bg-white/60">
                        <table className="w-full table-fixed border-collapse text-left">
                            <thead>
                                <tr className="h-[34px] bg-[#efefef]">
                                    <th scope="col" className="w-[169px] border-r border-[#a9a9ab] p-0 font-normal">
                                        <span className="flex items-start pl-[5px]">
                                            <svg className="mt-1" width="12" height="10" viewBox="0 0 12 10" aria-hidden="true"><path d="M0 0l6 5-6 5zM6 0l6 5-6 5z" /></svg>
                                            <span className="pl-[5px] pt-[7px]">表达式</span>
                                        </span>
                                    </th>
                                    <th scope="col" className="w-[75px] border-r border-[#a9a9ab] p-0 pl-[6px] pt-[7px] font-normal">单位</th>
                                    <th scope="col" className="border-r border-[#a9a9ab] p-0 pl-[6px] pt-[7px] font-normal">描述</th>
                                </tr>
                            </thead>
                            <tbody>
                                {[['t', '1'], ['', '']].map(([expr, unit], i) => (
                                    <tr key={i} className="h-[25px] border-b border-[#a9a9ab] bg-white">
                                        <td className="border-r border-[#a9a9ab] p-0 pl-[5px]">{expr}</td>
                                        <td className="border-r border-[#a9a9ab] p-0 pl-[5px]">{unit}</td>
                                        <td className="border-r border-[#a9a9ab] p-0" />
                                    </tr>
                                ))}
                            </tbody>
                        </table>
                    </div>
                    <div className="flex h-[34px] items-center pl-[11px]">
                        <IconButton name="up" label="上移" />
                        <IconButton name="down" label="下移" className="ml-[14px]" />
                        <IconButton name="listDel" label="删除" className="ml-[13px]" />
                        <IconButton name="broom" label="清除" className="ml-[10px]" />
                        <IconButton name="openOrange" label="加载" className="ml-[10px]" />
                        <IconButton name="save" label="保存" className="ml-2" />
                        <IconButton name="renameGray" label="重命名" className="ml-[7px]" />
                        <button type="button" aria-label="更多" className="ml-2"><Caret className="text-[#505052]" /></button>
                    </div>
                    <div className="flex flex-col px-[6px] pb-[14px]">
                        <label htmlFor="expr">表达式:</label>
                        <input id="expr" className={clsx(inputClass, 'mt-[7px] border-[#e6e7ea]')} />
                        <label htmlFor="descr" className="mt-2">描述:</label>
                        <input id="descr" className={clsx(inputClass, 'mt-2 border-[#e6e7ea]')} />
                    </div>
                    <SectionBar title="标题" open={false} />
                    <div className="h-[3px]" />
                    <SectionBar title="x 轴数据">
                        <IconButton name="renameBlue" label="重命名" />
                        <button type="button" aria-label="重命名选项" className="ml-2"><Caret /></button>
                        <IconButton name="addRemove" label="替换表达式" className="ml-4" />
                        <button type="button" aria-label="替换选项" className="ml-[10px]"><Caret /></button>
                    </SectionBar>
                    <div className="flex flex-col px-[6px] pt-3">
                        <label htmlFor="param">参数:</label>
                        <select id="param" className="mt-2 h-[26px] shrink-0 appearance-none rounded-[3px] border border-[#cfd0d4] bg-[#f0f0f2] px-[14px] leading-5">
                            <option>求解数据</option>
                        </select>
                    </div>
                </div>
                <div className="flex w-[21px] flex-col bg-[#fcfcfe]">
                    <Chevron up />
                    <span className="flex-[540] bg-[#e4e5e7]" />
                    <span className="flex-[125]" />
                    <Chevron />
                </div>
            </div>
        </section>
    );
}

/* ---------- graphics ---------- */

// transmission coefficient curve, one sample every 200 Hz from 17 kHz to 23 kHz
const CURVE = [
    64, 68, 76, 87, 101, 117, 136, 156, 177, 196, 213, 228, 240, 247, 250, 250,
    248, 243, 236, 231, 229, 230, 238, 250, 270, 296, 330, 370, 408, 447, 486,
];
const X0 = 82;
const X_STEP = 907 / 30;
const TICKS = [0, 1, 2, 3, 4, 5, 6].map(i => Math.round(X0 + i * X_STEP * 5));

function Plot() {
    const points = CURVE.map((y, i) => `${(X0 + i * X_STEP).toFixed(1)},${y}`).join(' ');
    return (
        <div className="relative min-h-0 flex-1 bg-white">
            <svg className="h-full w-full" viewBox="0 0 1010 546" fontFamily="DejaVu Sans, Noto Sans CJK SC, sans-serif" fontSize="16">
                <g stroke="#ebebeb" strokeWidth="2">
                    {TICKS.map(x => <path key={x} d={`M${x} 52v448`} />)}
                    <path d="M69 275h934" />
                </g>
                <g stroke="#808080" strokeWidth="2" fill="none">
                    <rect x="68" y="51" width="935" height="450" />
                    {TICKS.map(x => <path key={x} d={`M${x} 52v7M${x} 494v7`} />)}
                    <path d="M69 275h6M996 275h7" />
                </g>
                <polyline points={points} fill="none" stroke="#1f45f0" strokeWidth="1.200" />
                <text x="536" y="32" textAnchor="middle" fontSize="15">全局:&#160; (1)</text>
                <text x="63" y="281" textAnchor="end">0.0011</text>
                {TICKS.slice(0, 6).map((x, i) => (
                    <text key={x} x={x} y="521" textAnchor="middle">{17000 + i * 1000}</text>
                ))}
                <text x="536" y="538" textAnchor="middle" fontSize="15">freq (Hz)</text>
                <path d="M923 71h60v20h-60z" fill="#808080" />
                <rect x="926.500" y="67.500" width="60" height="20" fill="#fff" stroke="#000" />
                <path d="M935 77.500h34" stroke="#1f45f0" />
            </svg>
            <span className="absolute right-[6px] top-1"><Icon name="comsol" /></span>
        </div>
    );
}

function Graphics() {
    return (
        <section className="flex min-h-0 flex-1 flex-col border border-[#d0d2d8]">
            <PanelHeading title="图形" />
            <div className="flex h-[27px] shrink-0 items-center pb-[5px] pl-[10px]">
                <IconButton name="zoomIn" label="放大" />
                <IconButton name="zoomOut" label="缩小" className="ml-3" />
                <IconButton name="zoomBox" label="框选缩放" className="ml-[9px]" />
                <button type="button" aria-label="缩放选项" className="ml-[6px]"><Caret /></button>
                <IconButton name="extents" label="缩放到窗口大小" className="ml-[11px]" />
                <span className="ml-[9px] h-5 w-px bg-[#c9cbd0]" />
                <IconButton name="gridX" label="x 轴网格" className="ml-[7px]" />
                <IconButton name="gridY" label="y 轴网格" className="ml-2" />
                <IconButton name="legend" label="显示图例" className="ml-[5px] h-6 w-6 rounded-[3px] border border-[#1f8fe8] bg-[#9dd0f8]" />
                <IconButton name="aperture" label="环境" className="ml-[5px]" />
                <button type="button" aria-label="环境选项" className="ml-2"><Caret /></button>
                <IconButton name="camera" label="图像快照" className="ml-3" />
                <IconButton name="printer" label="打印" className="ml-2" />
            </div>
            <Plot />
        </section>
    );
}

/* ---------- messages ---------- */

const MESSAGES = [
    'COMSOL Multiphysics 6.1.0.252',
    '[2024年6月5日 下午4:28] 打开的文件：E:\\西北大学\\研0\\基于声学超表面的成像建模\\超表面仿真\\声强透射系数\\AirtoWater_port.mph',
    '[2024年6月5日 下午4:35] “2 个实体对象”形成的联合体。',
    '[2024年6月5日 下午4:35] 定型几何包含 2 个域、11 个边界、20 条边和 12 个顶点。',
    '[2024年6月5日 下午4:57] 完整网格包含“4718” 个域单元、920 个边界单元和 128 个边单元。',
];

function TabClose() {
    return (
        <svg className="ml-[9px]" width="12" height="12" viewBox="0 0 12 12" aria-hidden="true">
            <path d="M1 1l10 10M11 1L1 11" stroke="#ccd2dc" strokeWidth="2" />
        </svg>
    );
}

function Messages() {
    return (
        <section className="flex h-[181px] shrink-0 flex-col border border-[#d0d2d8]">
            <div className="flex h-[37px] shrink-0 items-end border-b border-[#d0d2d8] pl-[5px] pr-1 text-[17px] leading-6">
                <button type="button" className="-mb-px flex h-[31px] items-center border border-b-0 border-[#d0d2d8] bg-[#fafbff] pl-[5px] pr-[7px] pt-px text-[#2a569f]">
                    消息<TabClose />
                </button>
                <button type="button" className="ml-[11px] h-[30px] bg-[#ebebed] px-[5px] pt-px">进度</button>
                <button type="button" className="ml-[10px] h-[30px] bg-[#ebebed] px-[5px] pt-px">日志</button>
                <button type="button" className="ml-[10px] flex h-[30px] items-center bg-[#ebebed] pl-[5px] pr-2 pt-px">
                    表格<TabClose />
                </button>
                <div className="ml-auto flex h-[26px] items-center"><PanelControls /></div>
            </div>
            <div className="flex h-[35px] shrink-0 items-center pl-2 pt-[3px]">
                <IconButton name="broom" label="清除消息" />
                <IconButton name="mailWindow" label="自动显示消息" className="ml-[6px] h-6 w-6 rounded-[3px] border border-[#1f8fe8] bg-[#9dd0f8]" />
            </div>
            <div className="mx-[5px] mb-[5px] flex min-h-0 flex-1 border border-[#d0d2d8]">
                <div className="min-w-0 flex-1 overflow-hidden whitespace-nowrap pl-[2px] text-[15px] leading-5">
                    {MESSAGES.map(line => <p key={line}>{line}</p>)}
                </div>
                <div className="flex w-[21px] flex-col bg-[#fcfcfe]">
                    <Chevron up />
                    <span className="flex-[48] bg-[#e4e5e7]" />
                    <span className="flex-[10]" />
                    <Chevron />
                </div>
            </div>
        </section>
    );
}

/* ---------- overlays ---------- */

function Annotations() {
    return (
        <div className="pointer-events-none absolute inset-0 overflow-hidden text-[26px] leading-[35px] text-[#ff1f14]">
            <svg className="absolute left-0 top-0" width="1920" height="1021" viewBox="0 0 1920 1021">
                <g fill="none" stroke="#ff1f14" strokeWidth="4">
                    <rect x="430" y="481" width="251" height="30" rx="1" />
                    <rect x="890" y="495" width="99" height="44" rx="1" />
                    <rect x="959" y="731" width="950" height="50" rx="1" />
                </g>
                <g fill="#ff1f14">
                    <path d="M665 516l13 10-4 1 51 126-58-123-4 3z" />
                    <path d="M1234 490l-14 10 2-6-210 21 210-27-4-5z" />
                    <path d="M1300 501l2 19-5-3-90 200 84-203-6-1z" />
                </g>
            </svg>
            <p className="absolute left-[1073px] top-[407px] whitespace-nowrap">
                由于频率有所变化，声强透射系数是有波动的，但在0.011（我们的理论<br />值）附近波动。
            </p>
            <p className="absolute left-[705px] top-[667px] whitespace-nowrap">这就是我们刚刚在变量里设置的声强透射系数</p>
        </div>
    );
}

const METER = [
    '#2f3340', '#2f3340', '#e0605a', '#e0605a', '#e88a4a', '#e88a4a', '#e8a848', '#e8c848', '#dcd84c', '#c4dc54',
    '#a8dc5c', '#98d868', '#84d878', '#74d888', '#64d898', '#5cd8a8', '#54d4b0', '#4cd0b8', '#4cd0c0',
];

function LevelMeter() {
    return (
        <div className="absolute right-0 top-[741px] flex h-[74px] w-[13px] flex-col items-center gap-px rounded-l bg-[#535868] pl-1 pt-[9px]">
            {METER.map((color, i) => (
                <span key={i} className="h-[2px] w-[6px]" style={{ backgroundColor: color }} />
            ))}
        </div>
    );
}

export default function App() {
    return (
        <div className={clsx('relative flex h-screen flex-col overflow-hidden border-b border-[#3c5044] bg-[#fafbff] text-black', UI_FONT)}>
            <TitleBar />
            <MenuTabs />
            <Ribbon />
            <main className="mx-1 mt-[5px] flex min-h-0 flex-1 gap-[6px]">
                <ModelBuilder />
                <Settings />
                <div className="flex min-w-0 flex-1 flex-col gap-[6px]">
                    <Graphics />
                    <Messages />
                </div>
            </main>
            <footer className="flex h-10 shrink-0 items-center justify-between pl-[1074px] pr-[14px] pt-2">
                <span className="text-[15px] leading-5">784 MB | 1336 MB</span>
                <span className="pb-1 text-[17px] leading-6 text-[#8e8e92]">CSDN @夜～空～</span>
            </footer>
            <LevelMeter />
            <Annotations />
        </div>
    );
}
